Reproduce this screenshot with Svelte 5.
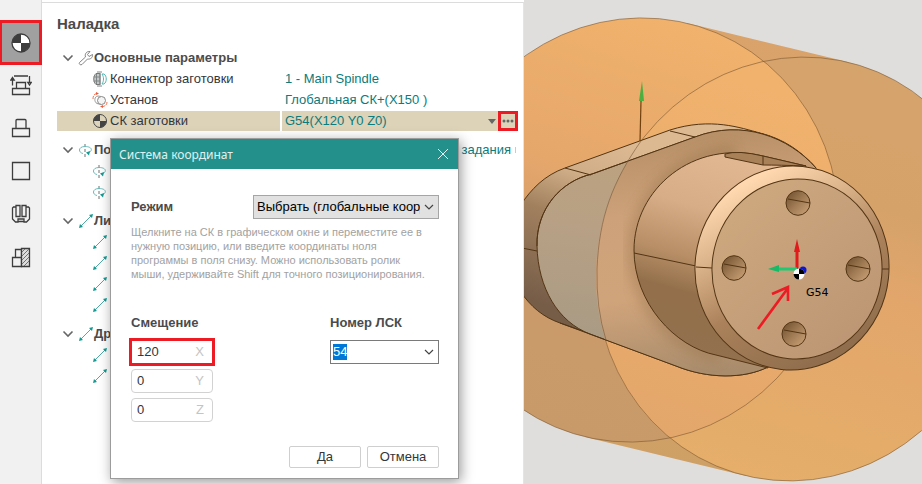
<script>
  import { onMount } from 'svelte';

  let tools = ['datum', 'swap', 'stock', 'square', 'clamp', 'hatch'];
  let groups = [
    {
      label: 'Основные параметры', icon: 'wrench',
      rows: [
        { icon: 'connector', label: 'Коннектор заготовки', value: '1 - Main Spindle' },
        { icon: 'setup', label: 'Установ', value: 'Глобальная СК+(X150 )' },
        { icon: 'datum', label: 'СК заготовки', value: 'G54(X120 Y0 Z0)', selected: true },
      ],
    },
    { label: 'По', icon: 'rotate', note: 'задания', rows: [{ icon: 'rotate' }, { icon: 'rotate' }] },
    { label: 'Ли', icon: 'axis', rows: [{ icon: 'axis' }, { icon: 'axis' }, { icon: 'axis' }, { icon: 'axis' }] },
    { label: 'Др', icon: 'axis', rows: [{ icon: 'axis' }, { icon: 'axis' }] },
  ];
  let offsets = [
    { axis: 'X', value: '120', marked: true },
    { axis: 'Y', value: '0' },
    { axis: 'Z', value: '0' },
  ];
  let holes = [[798, 203], [734, 268], [858, 269], [794, 334]];
  let lcs = '54';
  let lcsInput;

  onMount(() => {
    lcsInput.focus();
    lcsInput.select();
  });
</script>

{#snippet icon(name)}
  <svg class="icon" width="16" height="16" viewBox="0 0 16 16" fill="none" aria-hidden="true">
    {#if name === 'wrench'}
      <path d="M1.500 12.500 7.500 7C6.500 4 8.500 1 12 1.500L9.500 4.500 11 6.500 14.500 4.500C15 8 12 9.500 9.500 9L4 14.500C2.500 15.500.5 14 1.500 12.500Z" stroke="#858585" />
    {:else if name === 'connector'}
      <path d="M4 2.500h4v11H4C1 11 1 5 4 2.500Z" fill="#c4c8c8" stroke="#777" />
      <path d="M5 1h5M5 15h5M4.500 3v10M1.500 6H8M1.500 10H8M8 2v12" stroke="#808686" />
      <path d="M10 3h2c3 2 3 8 0 10h-2M10 3c2 3 2 7 0 10" stroke="#52b6b2" />
    {:else if name === 'setup'}
      <path d="M9 4.500 6 4C2 4.500 2 10 5 11.500l4 1" stroke="#999" />
      <circle cx="9.500" cy="8.500" r="4" fill="#f4f4f4" stroke="#888" />
      <path d="M1 7C1 4 2 2 5 1.500M15 10c0 3-2 4-4 4.500" stroke="#f07050" stroke-dasharray="3 1" />
      <path d="m4 0 3 1.500L4 3ZM11 13l-3 1.500 3 1.500Z" fill="#ee5a3a" />
    {:else if name === 'datum'}
      <circle cx="8" cy="8" r="6.500" fill="#ddd4bb" stroke="#444" />
      <path d="M8 8V1.500A6.500 6.500 0 0 0 1.500 8ZM8 8v6.500A6.500 6.500 0 0 0 14.500 8Z" fill="#444" />
    {:else if name === 'rotate'}
      <path d="M7 2v13" stroke="#b8b8b8" stroke-width="2" stroke-dasharray="3 2" />
      <path d="M5 11.500C0 10.500 0 4.500 7 4.500s8 4 4 6" stroke="#6abbb9" />
      <path d="m12 9-4 1.500 3 3Z" fill="#159a92" />
    {:else}
      <path d="M3 13 13 3" stroke="#4eaaa7" />
      <path d="m15 1-1 4-3-3ZM1 15l1-4 3 3Z" fill="#159a92" />
    {/if}
  </svg>
{/snippet}

<div class="app">
  <nav class="rail" aria-label="Наладка">
    {#each tools as tool, i}
      <button class="tool" class:active={i === 0} aria-label={tool}>
        <svg width="22" height="22" viewBox="0 0 22 22" fill="none" stroke="#3d3d3d" stroke-width="1.300" aria-hidden="true">
          {#if tool === 'datum'}
            <circle cx="11" cy="11" r="9" fill="#fff" />
            <path d="M11 11V2A9 9 0 0 0 2 11ZM11 11v9A9 9 0 0 0 20 11Z" fill="#3d3d3d" stroke="none" />
          {:else if tool === 'swap'}
            <path d="M2.500 19.500h17v-6h-17ZM6.500 13.500v-6h9v6M4 1h14M2.500 10.500V4M.8 5l1.700-2.500L4.200 5ZM19.500 1v6M17.800 7.500l1.700 2.500 1.700-2.500Z" />
          {:else if tool === 'stock'}
            <path d="M2.500 18.500h17v-8h-17ZM6 10.500v-8q0-1 1-1h8q1 0 1 1v8" />
          {:else if tool === 'square'}
            <path d="M2.500 1.500h17v17h-17Z" />
          {:else if tool === 'clamp'}
            <path d="M6 1.500h4v11H6ZM12 1.500h4v11h-4ZM6 3H3.500l-1 1v11l3 3H8v-3h6v3h2.500l3-3V4l-1-1H16M8 17.500h6" />
          {:else}
            <path d="M2.500 19.500v-9h9v9ZM5.500 10.500v-8h6v8" />
            <path d="M11.500 1.500h8v18h-8Z" fill="#ddd" />
            <path d="m12 5 3-3m-3 7 7-7m-7 11 7-7m-7 11 7-7m-5 9 5-5" stroke="#666" stroke-width=".9" />
          {/if}
        </svg>
      </button>
    {/each}
  </nav>

  <main class="panel">
    <h1>Наладка</h1>
    {#each groups as group}
      <section>
        <div class="row head">
          <div class="name">
            <button class="fold" aria-label={group.label}>
              <svg width="12" height="8" viewBox="0 0 12 8" fill="none" aria-hidden="true"><path d="m1.500 1.500 4.500 4.500 4.500-4.500" stroke="#666" stroke-width="1.600" /></svg>
            </button>
            {@render icon(group.icon)}
            <h2>{group.label}</h2>
          </div>
          {#if group.note}<div class="value note">{group.note}<i></i></div>{/if}
        </div>
        {#each group.rows as row}
          <div class="row" class:selected={row.selected}>
            <div class="name item">{@render icon(row.icon)}<span>{row.label ?? ''}</span></div>
            <div class="value">
              <span>{row.value ?? ''}</span>
              {#if row.selected}
                <button class="drop" aria-label={row.label}>
                  <svg width="8" height="5" viewBox="0 0 8 5" aria-hidden="true"><path d="M0 0h8L4 5Z" fill="#666" /></svg>
                </button>
                <button class="more" aria-label={row.value}>
                  <svg width="12" height="4" viewBox="0 0 12 4" fill="#666" aria-hidden="true"><circle cx="2" cy="2" r="1.500" /><circle cx="6" cy="2" r="1.500" /><circle cx="10" cy="2" r="1.500" /></svg>
                </button>
              {/if}
            </div>
          </div>
        {/each}
      </section>
    {/each}
  </main>

  <div class="view">
    <svg viewBox="524 0 398 484" preserveAspectRatio="xMinYMin slice" role="img" aria-label="G54">
      <defs>
        <linearGradient id="hull" x1="0" y1="0" x2="0" y2="1"><stop offset="0" stop-color="#daa36a" /><stop offset=".4" stop-color="#d3a16a" /><stop offset="1" stop-color="#cfa065" /></linearGradient>
        <linearGradient id="back" x1="0" y1="0" x2="0" y2="1"><stop offset="0" stop-color="#f0b26c" /><stop offset=".4" stop-color="#e6a76b" /><stop offset=".65" stop-color="#cb9a6b" /><stop offset="1" stop-color="#c89a69" /></linearGradient>
        <linearGradient id="front" gradientUnits="userSpaceOnUse" x1="800" y1="57" x2="800" y2="481"><stop offset="0" stop-color="#d5a46c" /><stop offset=".3" stop-color="#d5a26a" /><stop offset=".5" stop-color="#e2a66b" /><stop offset="1" stop-color="#e5ae69" /></linearGradient>
        <linearGradient id="both" gradientUnits="userSpaceOnUse" x1="700" y1="57" x2="700" y2="442"><stop offset="0" stop-color="#f0b26d" /><stop offset="1" stop-color="#e3a66b" /></linearGradient>
        <linearGradient id="side" gradientUnits="userSpaceOnUse" x1="590" y1="130" x2="530" y2="300"><stop offset="0" stop-color="#ddb992" /><stop offset=".25" stop-color="#cfad87" /><stop offset=".5" stop-color="#a1805e" /><stop offset="1" stop-color="#765d48" /></linearGradient>
        <linearGradient id="plate" gradientUnits="userSpaceOnUse" x1="640" y1="150" x2="610" y2="360"><stop offset="0" stop-color="#bda27e" /><stop offset=".4" stop-color="#b7a085" /><stop offset="1" stop-color="#a79a84" /></linearGradient>
        <linearGradient id="plateIn" gradientUnits="userSpaceOnUse" x1="660" y1="140" x2="690" y2="375"><stop offset="0" stop-color="#b89067" /><stop offset=".3" stop-color="#cda27a" /><stop offset=".65" stop-color="#d0a47b" /><stop offset="1" stop-color="#a98c6c" /></linearGradient>
        <linearGradient id="neck" gradientUnits="userSpaceOnUse" x1="720" y1="150" x2="665" y2="345"><stop offset="0" stop-color="#e1b892" /><stop offset=".3" stop-color="#d6ad86" /><stop offset=".55" stop-color="#b78e66" /><stop offset=".72" stop-color="#93704b" /><stop offset="1" stop-color="#93704e" /></linearGradient>
        <linearGradient id="rim" gradientUnits="userSpaceOnUse" x1="735" y1="190" x2="850" y2="355"><stop offset="0" stop-color="#ffd8b0" /><stop offset=".25" stop-color="#dcb48b" /><stop offset=".55" stop-color="#aa815a" /><stop offset="1" stop-color="#8d6c4c" /></linearGradient>
        <linearGradient id="face" x1="0" y1="0" x2="1" y2="1"><stop offset="0" stop-color="#d0aa7f" /><stop offset="1" stop-color="#ba9473" /></linearGradient>
        <linearGradient id="hole" x1="0" y1="0" x2="1" y2="1"><stop offset="0" stop-color="#6c4b2b" /><stop offset=".5" stop-color="#a07b54" /><stop offset="1" stop-color="#d0a67c" /></linearGradient>
        <clipPath id="frontClip"><ellipse cx="797" cy="269" rx="200" ry="213" transform="rotate(17 797 269)" /></clipPath>
        <clipPath id="plateClip"><path d="M537 246C536 209 561 181 592 174L695 137C742 119 789 137 816 168L768 367C744 379 708 379 676 366L590 334C558 322 538 288 537 246Z" /></clipPath>
        <filter id="soft"><feGaussianBlur stdDeviation="6" /></filter>
      </defs>

      <path d="M687 23 848 62 1000 269 746 476 585 437 636 230Z" fill="url(#hull)" />
      <ellipse cx="636" cy="230" rx="202" ry="213" transform="rotate(17 636 230)" fill="url(#back)" />
      <ellipse cx="797" cy="269" rx="200" ry="213" transform="rotate(17 797 269)" fill="url(#front)" />
      <g clip-path="url(#frontClip)">
        <ellipse cx="636" cy="230" rx="202" ry="213" transform="rotate(17 636 230)" fill="url(#both)" />
      </g>
      <g fill="none" stroke="#795630" stroke-opacity=".6" stroke-width=".9">
        <ellipse cx="636" cy="230" rx="202" ry="213" transform="rotate(17 636 230)" />
        <ellipse cx="797" cy="269" rx="200" ry="213" transform="rotate(17 797 269)" />
      </g>

      <g stroke="#533514" stroke-width="1" stroke-linejoin="round">
        <path d="M520 206C531 189 545 175 565 168L670 130C711 117 741 128 760 133C784 139 801 151 816 168L700 372 560 323C543 317 531 307 520 291Z" fill="url(#side)" />
        <path d="M537 246C536 209 561 181 592 174L695 137C742 119 789 137 816 168L768 367C744 379 708 379 676 366L590 334C558 322 538 288 537 246Z" fill="url(#plate)" />
        <g clip-path="url(#frontClip)" stroke="none">
          <path d="M537 246C536 209 561 181 592 174L695 137C742 119 789 137 816 168L768 367C744 379 708 379 676 366L590 334C558 322 538 288 537 246Z" fill="url(#plateIn)" />
        </g>
        <g clip-path="url(#plateClip)"><path d="M735 151C679 154 634 201 634 250 634 303 675 350 720 356" fill="none" stroke="#96724c" stroke-width="12" opacity=".45" filter="url(#soft)" /></g>
        <path d="M537 246C536 209 561 181 592 174L695 137C742 119 789 137 816 168M768 367C744 379 708 379 676 366L560 323M565 168l26 7M670 131l25 6M522 248l15 3" fill="none" />
        <path d="M597 269C599 217 613 181 641 141M597 269Q596 308 606 340" fill="none" stroke="#745638" opacity=".6" />
        <path d="M806 166 763 156C693 139 634 189 634 250 634 303 675 347 716 355L768 368Z" fill="url(#neck)" />
        <path d="M725 154Q738 150 763 156L806 166Q779 165 763 165L725 157Z" fill="#a98159" />
        <path d="M763 156v9M634 253l62 13" fill="none" />
        <ellipse cx="792" cy="268" rx="97" ry="102" transform="rotate(6 792 268)" fill="url(#rim)" />
        <path d="m696 267 16 1M882 269h7" />
        <ellipse cx="797" cy="269" rx="85" ry="90" transform="rotate(5 797 269)" fill="url(#face)" />
        {#each holes as [x, y]}
          <ellipse cx={x} cy={y} rx="12" ry="12.300" fill="url(#hole)" />
          <path d="M{x - 10} {y - 4} {x + 12} {y}" />
        {/each}
      </g>

      <path d="M641 101 640 141" stroke="#70400f" stroke-width="1.200" />
      <path d="m642 81 2 20h-5Z" fill="#4caf3f" />
      <path d="M797 269v-17" stroke="#e31a1c" stroke-width="3" />
      <path d="m797 239 3 13h-6Z" fill="#e31a1c" />
      <path d="M797 269h-18" stroke="#1fc873" stroke-width="3" />
      <path d="m768 269 11-4v7Z" fill="#17ba66" />
      <circle cx="803" cy="270" r="3.500" fill="#0b15d8" />
      <circle cx="799" cy="274" r="5.500" fill="#fff" />
      <path d="M799 274v-5.500a5.500 5.500 0 0 1 5.500 5.500ZM799 274v5.500a5.500 5.500 0 0 1-5.500-5.500Z" fill="#000" />
      <text x="806" y="296">G54</text>
      <path d="m758 329 30-41M772 294l16-7v14" fill="none" stroke="#ed1c24" stroke-width="2.600" />
    </svg>
  </div>

  <div class="dialog" role="dialog" aria-labelledby="dialog-title">
    <header>
      <span id="dialog-title">Система координат</span>
      <button class="close" aria-label="Отмена">
        <svg width="12" height="12" viewBox="0 0 12 12" aria-hidden="true"><path d="m1 1 10 10M11 1 1 11" stroke="#e2f0f0" /></svg>
      </button>
    </header>
    <form on:submit|preventDefault>
      <div class="mode">
        <label for="mode">Режим</label>
        <div class="select">
          <select id="mode"><option>Выбрать (глобальные координаты)</option></select>
          <svg width="10" height="6" viewBox="0 0 10 6" fill="none" aria-hidden="true"><path d="m1 1 4 4 4-4" stroke="#444" stroke-width="1.200" /></svg>
        </div>
      </div>
      <p>
        Щелкните на СК в графическом окне и переместите ее в<br />
        нужную позицию, или введите координаты ноля<br />
        программы в поля снизу. Можно использовать ролик<br />
        мыши, удерживайте Shift для точного позиционирования.
      </p>
      <div class="fields">
        <fieldset>
          <legend>Смещение</legend>
          {#each offsets as item}
            <label class="offset" class:marked={item.marked}>
              <input type="text" bind:value={item.value} />
              <span>{item.axis}</span>
            </label>
          {/each}
        </fieldset>
        <div class="lcs">
          <label for="lcs">Номер ЛСК</label>
          <div class="combo">
            <input id="lcs" type="text" bind:value={lcs} bind:this={lcsInput} />
            <button type="button" aria-label="Номер ЛСК">
              <svg width="10" height="6" viewBox="0 0 10 6" fill="none" aria-hidden="true"><path d="m1 1 4 4 4-4" stroke="#444" stroke-width="1.200" /></svg>
            </button>
          </div>
        </div>
      </div>
      <footer>
        <button type="submit">Да</button>
        <button type="button">Отмена</button>
      </footer>
    </form>
  </div>
</div>

<style>
  :global(body) { margin: 0; }
  .app {
    position: relative;
    display: grid;
    grid-template-columns: 42px minmax(0, 482fr) minmax(0, 398fr);
    min-height: 100vh;
    overflow: hidden;
    background: #fff;
    color: #33363b;
    font: 13px/20px "Liberation Sans", Arial, sans-serif;
  }
  button, input, select { font: inherit; color: inherit; box-sizing: border-box; }
  button { padding: 0; border: 0; background: none; }
  svg { display: block; flex: none; }

  .rail {
    padding-top: 21px;
    background: #f1f1f1;
    border-right: 1px solid #dcdcdc;
  }
  .tool {
    display: flex;
    align-items: center;
    justify-content: center;
    width: 100%;
    height: 43px;
  }
  .tool.active {
    position: relative;
    background: #a0a0a0;
    border: 2px solid #ed1c24;
    box-shadow: 0 0 0 1px #ed1c24;
  }

  .panel {
    margin-top: 2px;
    padding: 11px 5px 0 15px;
    border-top: 1px solid #dcdcdc;
    border-right: 1px solid #e4e4e4;
  }
  h1 { margin: 0 0 14px; font-size: 15px; line-height: 20px; color: #4b4b4b; }
  section { margin-bottom: 9px; }
  .row {
    display: grid;
    grid-template-columns: 223px minmax(0, 1fr);
    gap: 2px;
    height: 20px;
    margin-bottom: 1px;
  }
  .name, .value { display: flex; align-items: center; white-space: nowrap; }
  .name { padding-left: 5px; }
  .item { padding-left: 35px; gap: 2px; }
  .fold { display: flex; margin-right: 4px; }
  h2 { margin: 0; font-size: 13px; color: #4b4b4b; }
  .value { padding-left: 3px; color: #0b7b7b; }
  .value span { flex: 1; }
  .note { justify-content: flex-end; gap: 4px; padding-right: 2px; }
  .note i { width: 1px; height: 6px; background: #e9c795; }
  .selected .name, .selected .value { background: #dcd3b9; }
  .drop { display: flex; margin-right: 2px; }
  .more {
    display: flex;
    align-items: center;
    justify-content: center;
    width: 20px;
    height: 20px;
    border: 3px solid #ed1c24;
  }

  .view { min-width: 0; overflow: hidden; background: #dfdedd; }
  .view svg { width: 100%; height: 100%; }
  .view text { font: 11px "DejaVu Sans", sans-serif; fill: #000; }

  .dialog {
    position: absolute;
    left: 110px;
    top: 138px;
    width: 347px;
    border: 1px solid #9c9c9c;
    background: #fff;
    box-shadow: 2px 3px 12px rgba(0, 0, 0, .4);
  }
  header {
    display: flex;
    align-items: center;
    justify-content: space-between;
    height: 30px;
    padding: 0 9px 0 8px;
    background: #24908c;
    color: #e2f0f0;
    font: 12px "Noto Sans", sans-serif;
  }
  form { padding: 26px 19px 10px 20px; }
  .mode { display: flex; align-items: center; justify-content: space-between; }
  .mode label, legend, .lcs label { font-weight: bold; color: #4b4b4b; }
  .select {
    position: relative;
    display: flex;
    align-items: center;
    width: 186px;
    height: 24px;
    box-sizing: border-box;
    border: 1px solid #a5a5a5;
    background: #e1e1e1;
    color: #000;
  }
  select {
    appearance: none;
    flex: 1;
    min-width: 0;
    height: 22px;
    padding: 0 0 0 3px;
    border: 0;
    background: none;
    outline: 0;
  }
  .select svg { margin: 0 4px; }
  p { margin: 6px 0 32px; font-size: 11px; line-height: 14px; color: #a2a2a2; white-space: nowrap; }
  .fields { display: flex; justify-content: space-between; }
  fieldset { margin: 0; padding: 0; border: 0; }
  legend { padding: 0; margin-bottom: 7px; }
  .offset {
    display: flex;
    align-items: center;
    width: 82px;
    height: 24px;
    box-sizing: border-box;
    margin-bottom: 5px;
    padding: 0 8px 0 5px;
    border: 1px solid #d2d2d2;
    border-radius: 4px;
  }
  .offset input { flex: 1; width: 0; padding: 0; border: 0; outline: 0; background: none; }
  .offset span { color: #c4c4c4; }
  .marked { border-color: transparent; border-radius: 0; outline: 3px solid #ed1c24; outline-offset: -1px; }
  .lcs { width: 109px; }
  .lcs label { display: block; margin-bottom: 7px; }
  .combo {
    display: flex;
    align-items: center;
    height: 24px;
    box-sizing: border-box;
    padding: 0 4px 0 2px;
    border: 1px solid #7a7a7a;
  }
  .combo input { flex: 1; width: 0; height: 16px; padding: 0; border: 0; outline: 0; }
  .combo input::selection { background: #0078d7; color: #fff; }
  footer { display: flex; justify-content: flex-end; gap: 6px; margin-top: 19px; }
  footer button { width: 72px; height: 22px; border: 1px solid #cfcfcf; border-radius: 2px; }
</style>
